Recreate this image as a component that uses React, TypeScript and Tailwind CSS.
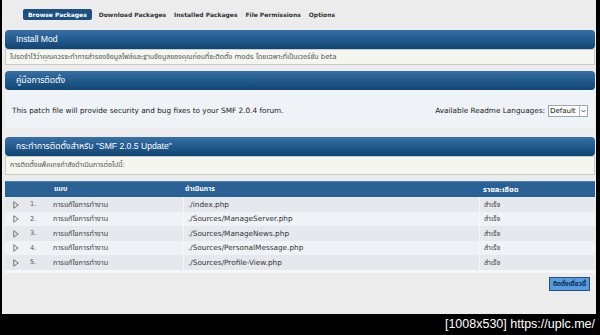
import React from 'react';

// Package install preview (SMF admin) – rows of the actions list
interface ActionRow {
    num: number;
    type: string;
    file: string;
    status: string;
}

const rows: ActionRow[] = [
    { num: 1, type: 'การแก้ไขการทำงาน', file: './index.php', status: 'สำเร็จ' },
    { num: 2, type: 'การแก้ไขการทำงาน', file: './Sources/ManageServer.php', status: 'สำเร็จ' },
    { num: 3, type: 'การแก้ไขการทำงาน', file: './Sources/ManageNews.php', status: 'สำเร็จ' },
    { num: 4, type: 'การแก้ไขการทำงาน', file: './Sources/PersonalMessage.php', status: 'สำเร็จ' },
    { num: 5, type: 'การแก้ไขการทำงาน', file: './Sources/Profile-View.php', status: 'สำเร็จ' },
];

const tabs = ['Browse Packages', 'Download Packages', 'Installed Packages', 'File Permissions', 'Options'];

const font = "font-['DejaVu_Sans','Noto_Sans_Thai','Loma','Garuda','Noto_Sans',sans-serif]";

const CatBar = ({ title }: { title: string }) => (
    <div className="h-[19px] rounded-[4px] bg-linear-to-b from-[#3670a6] to-[#0f4573] flex items-center pl-[11px]">
        <span className="text-white text-[8.6px] font-['Liberation_Sans','Noto_Sans_Thai','Loma',sans-serif] leading-none">{title}</span>
    </div>
);

const Arrow = () => (
    <svg width="6" height="8" viewBox="0 0 6 8" className="block">
        <path d="M0.8 0.8 L5.2 4 L0.8 7.2 Z" fill="none" stroke="#555" strokeWidth="0.8" strokeLinejoin="round" />
    </svg>
);

export default function App() {
    return (
        <div className={`w-[600px] h-[335px] bg-black flex flex-col overflow-hidden ${font}`}>
            <div className="h-[314px] ml-[2px] mr-[4px] bg-[#ececec] pl-[3px] pr-[1px] flex flex-col">
                {/* tabs */}
                <div className="mt-[9px] h-[11px] flex items-center pl-[18px] gap-[6px]">
                    {tabs.map((t, i) => (
                        <span
                            key={t}
                            className={
                                i === 0
                                    ? 'h-[11px] px-[5px] rounded-[2px] bg-[#1d4f80] text-white text-[6px] font-bold flex items-center leading-none'
                                    : 'text-[#333] text-[6px] font-bold leading-none px-[1px]'
                            }
                        >
                            {t}
                        </span>
                    ))}
                </div>

                {/* install mod */}
                <div className="mt-[10px]">
                    <CatBar title="Install Mod" />
                    <div className="h-[16px] border border-[#c9ccc4] bg-[#f4f6ef] flex items-center pl-[4px]">
                        <span className="text-[7px] text-[#555] leading-none whitespace-nowrap">
                            โปรดจำไว้ว่าคุณควรจะทำการสำรองข้อมูลไฟล์และฐานข้อมูลของคุณก่อนที่จะติดตั้ง mods โดยเฉพาะที่เป็นเวอร์ชั่น beta
                        </span>
                    </div>
                </div>

                {/* readme */}
                <div className="mt-[6px]">
                    <CatBar title="คู่มือการติดตั้ง" />
                    <div className="h-[38px] bg-[#eff2f6] rounded-b-[4px] flex items-center justify-between pl-[7px] pr-[7px] pt-[4px]">
                        <span className="text-[7.3px] text-[#222] leading-none">
                            This patch file will provide security and bug fixes to your SMF 2.0.4 forum.
                        </span>
                        <div className="flex items-center gap-[3px]">
                            <span className="text-[7.3px] text-[#222] leading-none">Available Readme Languages:</span>
                            <div className="h-[12px] w-[40px] bg-white border border-[#9aa] flex items-center">
                                <span className="flex-1 text-[7px] text-[#111] leading-none pl-[1px]">Default</span>
                                <div className="w-[8px] h-full border-l border-[#bbb] flex items-center justify-center">
                                    <svg width="5" height="4" viewBox="0 0 5 4">
                                        <path d="M0.5 1 L2.5 3 L4.5 1" fill="none" stroke="#444" strokeWidth="0.9" />
                                    </svg>
                                </div>
                            </div>
                        </div>
                    </div>
                </div>

                {/* actions */}
                <div className="mt-[9px]">
                    <CatBar title={'กระทำการติดตั้งสำหรับ "SMF 2.0.5 Update"'} />
                    <div className="h-[19px] border border-[#c9ccc4] bg-[#f4f6ef] flex items-center pl-[4px]">
                        <span className="text-[7px] text-[#555] leading-none">การติดตั้งแพ็คเกจกำลังดำเนินการต่อไปนี้:</span>
                    </div>
                </div>

                <div className="mt-[6px]">
                    <div className="h-[16px] bg-[#2a6194] border-t border-[#4a80b0] flex items-center text-white text-[7px] font-bold leading-none">
                        <div className="w-[178px] pl-[49px]">แบบ</div>
                        <div className="w-[296px] pl-[2px]">ดำเนินการ</div>
                        <div className="flex-1 pl-[4px] text-[7.5px]">รายละเอียด</div>
                    </div>
                    {rows.map((r, i) => (
                        <div
                            key={r.num}
                            className={`${i % 2 === 0 ? 'h-[15px] bg-[#e5e8ed]' : 'h-[14px] bg-[#eff2f6]'} flex items-center text-[#444]`}
                        >
                            <div className="w-[25px] pl-[8px]">
                                <Arrow />
                            </div>
                            <div className="w-[23px] text-[6.6px] text-[#555] leading-none">{r.num}.</div>
                            <div className="w-[130px] text-[7.3px] leading-none">{r.type}</div>
                            <div className="w-[296px] h-full flex items-center pl-[4px] border-l border-[#f4f6f9] text-[7.3px] text-[#333] leading-none">{r.file}</div>
                            <div className="flex-1 h-full flex items-center pl-[4px] border-l border-[#f4f6f9] text-[7.2px] leading-none">{r.status}</div>
                        </div>
                    ))}
                    <div className="h-[3px] bg-[#f6f7f9]" />
                </div>

                <div className="mt-[4px] flex justify-end pr-[5px]">
                    <button className="h-[14px] px-[3px] bg-[#559de0] border border-[#2b4f78] text-[#102a48] text-[6.3px] font-bold leading-none">
                        ติดตั้งเดี๋ยวนี้
                    </button>
                </div>
            </div>

            <div className="flex-1 flex items-center justify-end pr-[5px]">
                <span className="text-white text-[12.5px] font-['Liberation_Sans',sans-serif] leading-none">[1008x530] https://uplc.me/</span>
            </div>
        </div>
    );
}
